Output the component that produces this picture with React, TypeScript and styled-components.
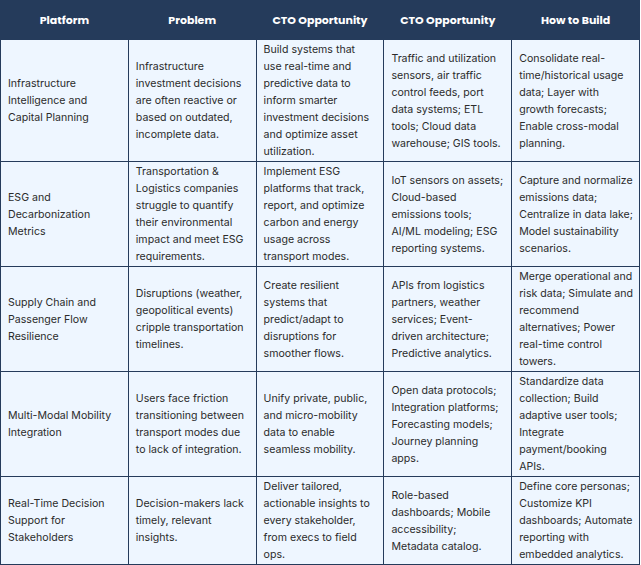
import React from 'react';
import styled, { createGlobalStyle } from 'styled-components';

const GlobalStyle = createGlobalStyle`
    html, body {
        margin: 0;
        padding: 0;
        background: #ffffff;
    }
`;

const Table = styled.table`
    width: 640px;
    table-layout: fixed;
    border-collapse: collapse;
    font-family: Inter, 'Liberation Sans', sans-serif;
    font-size: 10.6px;
    line-height: 17px;
`;

const HeadCell = styled.th`
    height: 38px;
    padding: 0 6px;
    background: #253b5b;
    color: #ffffff;
    font-family: Poppins, Inter, 'Liberation Sans', sans-serif;
    font-weight: 700;
    font-size: 11px;
    text-align: center;
    border: 1px solid #253b5b;
    border-left-color: #e6eef8;
    &:first-child {
        border-left-color: #253b5b;
    }
`;

// line breaks follow the original layout, so text is kept on one line per entry
const Cell = styled.td`
    padding: 1px 7px;
    background: #eef6ff;
    color: #2b2b2b;
    vertical-align: middle;
    white-space: pre;
    overflow: hidden;
    border: 1px solid #253b5b;
`;

const rows: string[][] = [
    [
        'Infrastructure\nIntelligence and\nCapital Planning',
        'Infrastructure\ninvestment decisions\nare often reactive or\nbased on outdated,\nincomplete data.',
        'Build systems that\nuse real-time and\npredictive data to\ninform smarter\ninvestment decisions\nand optimize asset\nutilization.',
        'Traffic and utilization\nsensors, air traffic\ncontrol feeds, port\ndata systems; ETL\ntools; Cloud data\nwarehouse; GIS tools.',
        'Consolidate real-\ntime/historical usage\ndata; Layer with\ngrowth forecasts;\nEnable cross-modal\nplanning.',
    ],
    [
        'ESG and\nDecarbonization\nMetrics',
        'Transportation &\nLogistics companies\nstruggle to quantify\ntheir environmental\nimpact and meet ESG\nrequirements.',
        'Implement ESG\nplatforms that track,\nreport, and optimize\ncarbon and energy\nusage across\ntransport modes.',
        'IoT sensors on assets;\nCloud-based\nemissions tools;\nAI/ML modeling; ESG\nreporting systems.',
        'Capture and normalize\nemissions data;\nCentralize in data lake;\nModel sustainability\nscenarios.',
    ],
    [
        'Supply Chain and\nPassenger Flow\nResilience',
        'Disruptions (weather,\ngeopolitical events)\ncripple transportation\ntimelines.',
        'Create resilient\nsystems that\npredict/adapt to\ndisruptions for\nsmoother flows.',
        'APIs from logistics\npartners, weather\nservices; Event-\ndriven architecture;\nPredictive analytics.',
        'Merge operational and\nrisk data; Simulate and\nrecommend\nalternatives; Power\nreal-time control\ntowers.',
    ],
    [
        'Multi-Modal Mobility\nIntegration',
        'Users face friction\ntransitioning between\ntransport modes due\nto lack of integration.',
        'Unify private, public,\nand micro-mobility\ndata to enable\nseamless mobility.',
        'Open data protocols;\nIntegration platforms;\nForecasting models;\nJourney planning\napps.',
        'Standardize data\ncollection; Build\nadaptive user tools;\nIntegrate\npayment/booking\nAPIs.',
    ],
    [
        'Real-Time Decision\nSupport for\nStakeholders',
        'Decision-makers lack\ntimely, relevant\ninsights.',
        'Deliver tailored,\nactionable insights to\nevery stakeholder,\nfrom execs to field\nops.',
        'Role-based\ndashboards; Mobile\naccessibility;\nMetadata catalog.',
        'Define core personas;\nCustomize KPI\ndashboards; Automate\nreporting with\nembedded analytics.',
    ],
];

const headers = ['Platform', 'Problem', 'CTO Opportunity', 'CTO Opportunity', 'How to Build'];

const App = () => (
    <>
        <GlobalStyle />
        <Table>
            <thead>
                <tr>
                    {headers.map((h, i) => (
                        <HeadCell key={i}>{h}</HeadCell>
                    ))}
                </tr>
            </thead>
            <tbody>
                {rows.map((row, r) => (
                    <tr key={r}>
                        {row.map((text, c) => (
                            <Cell key={c}>{text}</Cell>
                        ))}
                    </tr>
                ))}
            </tbody>
        </Table>
    </>
);

export default App;
